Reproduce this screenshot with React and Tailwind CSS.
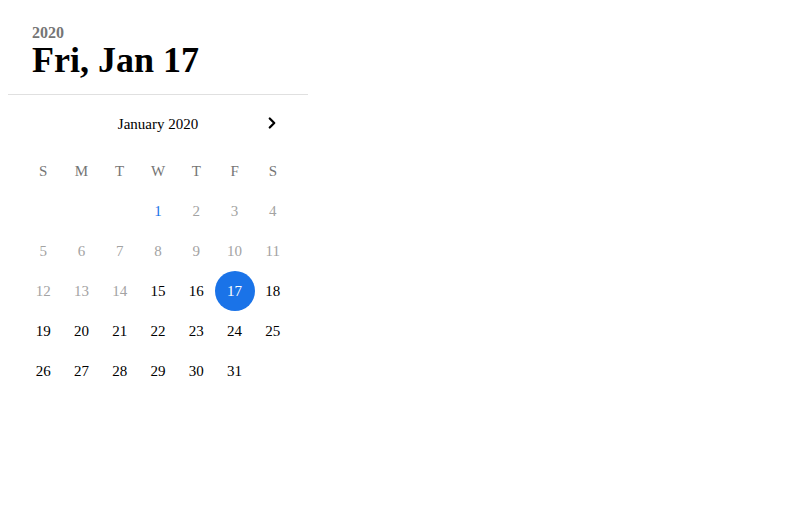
import { ChevronRight } from 'lucide-react';

const weekdays = ['S', 'M', 'T', 'W', 'T', 'F', 'S'];

function dayClass(d) {
  if (d === 17) return 'bg-[#1a73e8] text-white';
  if (d === 1) return 'text-[#1a73e8]';
  if (d < 15) return 'text-[#a3a3a3]';
  return 'text-black';
}

export default function App() {
  // Jan 2020 starts on Wednesday
  const cells = [null, null, null];
  for (let d = 1; d <= 31; d++) cells.push(d);

  return (
    <div className="p-2 font-['Liberation_Serif',serif]">
      <div className="w-[300px]">
        <div className="px-6 pt-[17px] pb-[16px] border-b border-[#e0e0e0]">
          <div className="text-base leading-4 font-bold text-[#757575]">2020</div>
          <div className="text-[36px] leading-none font-bold text-black mt-[1px]">Fri, Jan 17</div>
        </div>
        <div className="relative h-14 flex items-center justify-center">
          <span className="text-[15px] text-black pt-[2px]">January 2020</span>
          <button className="absolute right-[27px] top-1/2 -translate-y-1/2 text-black">
            <ChevronRight className="w-[18px] h-[18px]" strokeWidth={3} />
          </button>
        </div>
        <div className="px-4 grid grid-cols-7">
          {weekdays.map((w, i) => (
            <div key={i} className="h-10 flex items-center justify-center text-[15px] text-[#757575]">
              {w}
            </div>
          ))}
          {cells.map((d, i) => (
            <div key={i} className="h-10 flex items-center justify-center">
              {d && (
                <span className={`shrink-0 w-10 h-10 rounded-full flex items-center justify-center text-[15px] ${dayClass(d)}`}>
                  {d}
                </span>
              )}
            </div>
          ))}
        </div>
      </div>
    </div>
  );
}
